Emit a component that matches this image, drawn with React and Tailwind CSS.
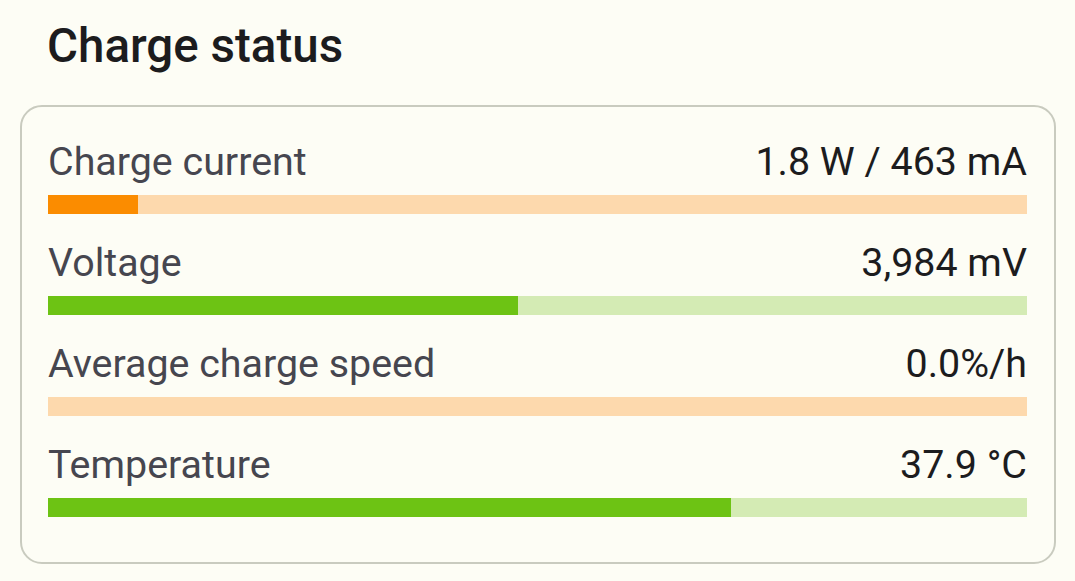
import React from 'react';

const rows = [
  { label: 'Charge current', value: '1.8 W / 463 mA', pct: 9.2, fill: 'bg-[#fb8c00]', track: 'bg-[#fdd9ad]' },
  { label: 'Voltage', value: '3,984 mV', pct: 48, fill: 'bg-[#6dc314]', track: 'bg-[#d4ebb4]' },
  { label: 'Average charge speed', value: '0.0%/h', pct: 0, fill: 'bg-[#fb8c00]', track: 'bg-[#fdd9ad]' },
  { label: 'Temperature', value: '37.9 °C', pct: 69.8, fill: 'bg-[#6dc314]', track: 'bg-[#d4ebb4]' },
];

const StatusRow = ({ label, value, pct, fill, track }) => (
  <div className="pb-[25px]">
    <div className="flex justify-between items-baseline text-[39.4px] leading-[47px]">
      <span className="text-[#46464f]">{label}</span>
      <span className="text-[#1c1c1e]">{value}</span>
    </div>
    <div className={`mt-[10px] h-[19px] w-full ${track}`}>
      {pct > 0 && <div className={`h-full ${fill}`} style={{ width: `${pct}%` }} />}
    </div>
  </div>
);

export default function App() {
  return (
    <div
      className="w-[1075px] h-[581px] bg-[#fdfdf5] overflow-hidden"
      style={{ fontFamily: 'Roboto, "Liberation Sans", sans-serif' }}
    >
      <h1 className="pt-[19px] pl-[47px] text-[47.5px] leading-[55px] font-medium text-[#1c1c1e]">
        Charge status
      </h1>
      <div className="mt-[31px] ml-[20px] w-[1036px] rounded-[22px] border-2 border-[#c9cbbf] pt-[31px] pb-[20px] pl-[26px] pr-[27px]">
        {rows.map((r) => (
          <StatusRow key={r.label} {...r} />
        ))}
      </div>
    </div>
  );
}
